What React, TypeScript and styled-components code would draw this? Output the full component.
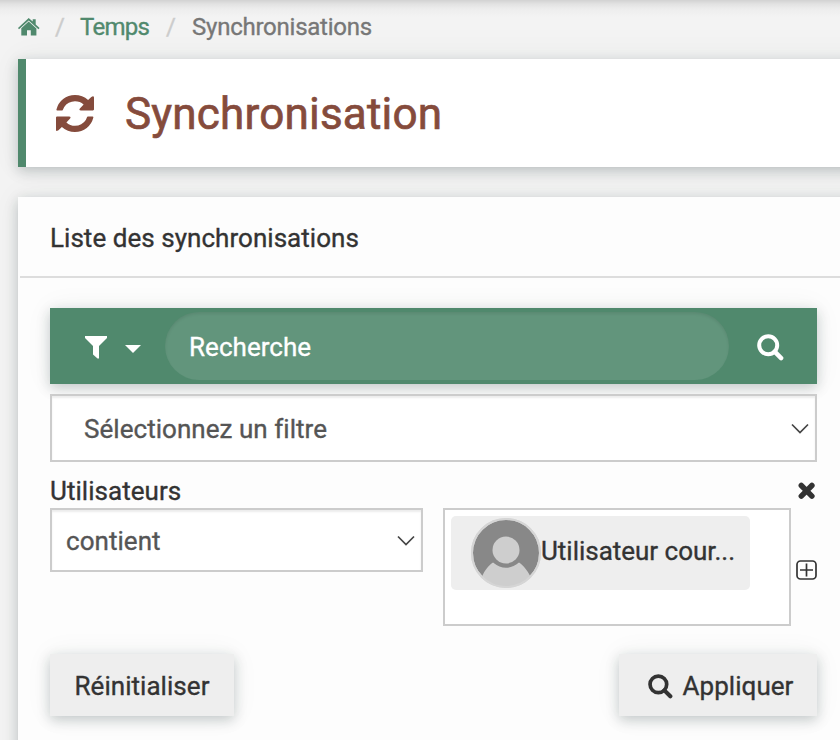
import React from "react";
import styled, { createGlobalStyle } from "styled-components";

const GlobalStyle = createGlobalStyle`
  * { box-sizing: border-box; }
  html, body { margin: 0; overflow: hidden; }
  body {
    background: #f3f3f3;
    font-family: Roboto, sans-serif;
    font-size: 26px;
    letter-spacing: 0.04px;
    color: #333;
    -webkit-text-stroke: 0.35px currentColor;
  }
  button, input { font: inherit; letter-spacing: inherit; color: inherit; border: 0; margin: 0; padding: 0; background: none; }
  svg { flex: none; }
`;

const lift = "0 4px 12px rgba(20, 35, 40, 0.22), 0 0 28px rgba(30, 60, 50, 0.06)";

const Page = styled.div`
  width: 840px;
  height: 740px;
  overflow: hidden;
  padding-left: 18px;
  display: flex;
  flex-direction: column;
  background: linear-gradient(#d2d2d2, #e2e2e2 4px, #ededed 9px, #f3f3f3 17px);
`;

const Breadcrumb = styled.nav`
  height: 59px;
  flex: none;
  display: flex;
  align-items: center;
  padding-bottom: 5px;
  font-size: 24px;
  letter-spacing: -0.24px;
  color: #777;
`;

const Crumb = styled.a<{ $width: number }>`
  color: #50896d;
  width: ${(p) => p.$width}px;
  display: flex;
  white-space: nowrap;
  letter-spacing: -0.75px;
`;

const Slash = styled.span<{ $width: number }>`
  width: ${(p) => p.$width}px;
  color: #ccc;
`;

const TitleBar = styled.header`
  height: 108px;
  width: 860px;
  flex: none;
  background: #fff;
  border-left: 8px solid #50896d;
  box-shadow: ${lift};
  display: flex;
  align-items: center;
  color: #854b3c;
  padding-left: 30px;
`;

const Title = styled.h1`
  margin: 2px 0 0 31px;
  font-size: 44px;
  font-weight: 400;
  letter-spacing: 0.2px;
  line-height: 60px;
  -webkit-text-stroke: 0.7px currentColor;
`;

const Panel = styled.section`
  margin-top: 30px;
  width: 860px;
  height: 580px;
  flex: none;
  background: #fdfdfd;
  box-shadow: ${lift};
`;

const PanelHeader = styled.h2`
  margin: 0 0 0 2px;
  height: 81px;
  border-bottom: 2px solid #ddd;
  padding: 0 0 0 30px;
  font-size: 26px;
  font-weight: 400;
  line-height: 83px;
`;

const PanelBody = styled.div`
  width: 767px;
  margin: 30px 0 0 32px;
`;

const SearchBar = styled.form`
  height: 76px;
  display: flex;
  align-items: center;
  background: #50896d;
  box-shadow: ${lift};
  color: #fff;
`;

const FilterButton = styled.button`
  width: 115px;
  height: 76px;
  display: flex;
  align-items: center;
  gap: 18px;
  padding: 2px 0 0 35px;
`;

const CaretDown = styled.svg`
  margin-top: 4px;
`;

const SearchInput = styled.input`
  width: 564px;
  height: 68px;
  border-radius: 34px;
  padding: 2px 24px 0;
  background: #62957c;
  box-shadow: inset 0 2px 3px rgba(0, 0, 0, 0.08);
  &::placeholder { color: #fff; opacity: 1; }
`;

const SearchButton = styled.button`
  flex: 1;
  height: 76px;
  display: flex;
  align-items: center;
  padding: 2px 0 0 28px;
`;

const SelectBox = styled.div<{ $width: number; $height: number; $indent: number }>`
  width: ${(p) => p.$width}px;
  height: ${(p) => p.$height}px;
  border: 2px solid #ccc;
  background: #fff;
  box-shadow: inset 0 2px 2px rgba(0, 0, 0, 0.075);
  color: #555;
  display: flex;
  align-items: center;
  justify-content: space-between;
  padding: 2px 6px 0 ${(p) => p.$indent}px;
`;

const FilterSelect = styled.div`
  margin-top: 10px;
`;

const FieldLabel = styled.div`
  height: 46px;
  display: flex;
  justify-content: space-between;
  align-items: center;
  padding-top: 12px;
`;

const Criteria = styled.div`
  height: 118px;
  display: flex;
  align-items: flex-start;
`;

const TagBox = styled.div`
  width: 348px;
  height: 118px;
  margin-left: 20px;
  border: 2px solid #ccc;
  background: #fff;
  padding: 6px;
`;

const Tag = styled.div`
  width: 299px;
  height: 74px;
  border-radius: 5px;
  background: #eee;
  display: flex;
  align-items: center;
  padding-left: 20px;
`;

const TagText = styled.span`
  height: 36px;
  line-height: 32px;
  white-space: nowrap;
  letter-spacing: -0.02px;
`;

const AddButton = styled.button`
  align-self: center;
  display: flex;
  margin: 6px 0 0 5px;
`;

const Actions = styled.div`
  margin-top: 28px;
  display: flex;
  justify-content: space-between;
`;

const ActionButton = styled.button<{ $width: number; $shift?: number }>`
  width: ${(p) => p.$width}px;
  height: 62px;
  background: #eee;
  box-shadow: ${lift};
  display: flex;
  align-items: center;
  justify-content: center;
  gap: 10px;
  padding: 2px 0 0 ${(p) => p.$shift ?? 0}px;
`;

const HomeIcon = () => (
  <svg width="22" height="18" viewBox="0 0 22 18" fill="currentColor">
    <path d="M10.7 0 14.7 3.600V1.200h3v5.200L21.600 10l-1.200 1.200L10.700 2.400 1 11.200 0 10Z" />
    <path d="m10.700 3.600 7.700 7V17.500H12.800v-5.200H9v5.200H3.300v-7.200Z" />
  </svg>
);

const Magnifier = ({ size }: { size: number }) => (
  <svg width={size} height={size} viewBox="0 0 27 27" fill="none" stroke="currentColor">
    <circle cx="11.200" cy="11.200" r="9" strokeWidth="4" />
    <path d="m17.700 17.700 6.400 6.400" strokeWidth="4.500" strokeLinecap="round" />
  </svg>
);

const Chevron = () => (
  <svg width="18" height="12" viewBox="0 0 18 12" fill="none" stroke="#444" strokeWidth="1.700">
    <path d="m1 1.500 8 8 8-8" />
  </svg>
);

const SyncShape = styled.svg`
  margin-top: 1px;
`;

const SyncIcon = () => (
  <SyncShape width="38" height="37" viewBox="0 0 1536 1536" preserveAspectRatio="none" fill="currentColor">
    <path d="M1511 928q0 5-1 7-64 268-268 434.500T764 1536q-146 0-282.500-55T238 1324l-129 129q-19 19-64 36Q0 1508 0 1444V930q0-34 45-34h480q58 0 64 30 0 20-19 45L420 1141q71 66 161 102t187 36q134 0 250-65t186-179q11-17 53-117 8-23 30-23h192q13 0 22.500 9.500t9.500 22.500zM1536 100V606q0 34-45 34H1010q-56 0-63-30 0-20 19-45L1117 394Q969 256 768 256q-134 0-250 65T332 500q-11 17-53 117-8 23-30 23H50q-13 0-22.500-9.500T18 608v-7q65-268 270-434.500T768 0q146 0 284 55.500T1297 212l130-129 64-30q45 0 45 47z" />
  </SyncShape>
);

const Avatar = () => (
  <svg width="70" height="70" viewBox="0 0 70 70">
    <defs>
      <clipPath id="disc"><circle cx="35" cy="35" r="33.500" /></clipPath>
    </defs>
    <circle cx="35" cy="35" r="34" fill="#888" stroke="#d5d5d5" strokeWidth="2" />
    <g clipPath="url(#disc)" fill="#cecece">
      <path d="M11 58.500C14 52 17 48 22 44.500Q35 55 48 44.500C53 48 56 52 59.500 58.500L59 70H11Z" />
      <circle cx="35" cy="32" r="13.500" />
    </g>
    <circle cx="35" cy="35" r="34" fill="none" stroke="#d5d5d5" strokeWidth="2" />
  </svg>
);

export default function App() {
  return (
    <Page>
      <GlobalStyle />
      <Breadcrumb>
        <Crumb $width={37}><HomeIcon /></Crumb>
        <Slash $width={25}>/</Slash>
        <Crumb $width={86}>Temps</Crumb>
        <Slash $width={26}>/</Slash>
        <span>Synchronisations</span>
      </Breadcrumb>
      <TitleBar>
        <SyncIcon />
        <Title>Synchronisation</Title>
      </TitleBar>
      <Panel>
        <PanelHeader>Liste des synchronisations</PanelHeader>
        <PanelBody>
          <SearchBar>
            <FilterButton type="button">
              <svg width="22" height="23" viewBox="0 0 22 23" fill="currentColor">
                <path d="M0 0h22v2l-8 8v12.500h-1.500L8 18.500V10L0 2Z" />
              </svg>
              <CaretDown width="16" height="8" viewBox="0 0 16 8" fill="currentColor"><path d="M0 0h16L8 8Z" /></CaretDown>
            </FilterButton>
            <SearchInput placeholder="Recherche" />
            <SearchButton type="button"><Magnifier size={27} /></SearchButton>
          </SearchBar>
          <FilterSelect>
            <SelectBox $width={767} $height={68} $indent={32}>Sélectionnez un filtre<Chevron /></SelectBox>
          </FilterSelect>
          <FieldLabel>
            Utilisateurs
            <svg width="22" height="18" viewBox="0 0 22 18" stroke="currentColor" strokeWidth="5.500" strokeLinecap="round">
              <path d="m6.300 3.500 10.600 10.600m0-10.600-10.600 10.600" />
            </svg>
          </FieldLabel>
          <Criteria>
            <SelectBox $width={373} $height={64} $indent={14}>contient<Chevron /></SelectBox>
            <TagBox>
              <Tag><Avatar /><TagText>Utilisateur cour...</TagText></Tag>
            </TagBox>
            <AddButton>
              <svg width="21" height="20" viewBox="0 0 21 20" fill="none" stroke="currentColor" strokeWidth="1.700">
                <rect x="1" y="1" width="19" height="18" rx="3.500" />
                <path d="M4 10h13M10.500 3.500v13" />
              </svg>
            </AddButton>
          </Criteria>
          <Actions>
            <ActionButton $width={184}>Réinitialiser</ActionButton>
            <ActionButton $width={198} $shift={5}><Magnifier size={25} />Appliquer</ActionButton>
          </Actions>
        </PanelBody>
      </Panel>
    </Page>
  );
}
